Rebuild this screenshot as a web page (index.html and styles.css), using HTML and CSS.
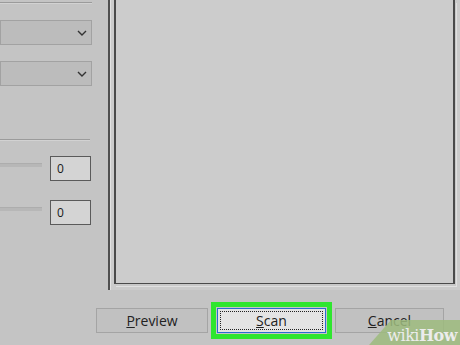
FILE: index.html
```html
<!DOCTYPE html>
<html lang="en">
<head>
    <meta charset="UTF-8">
    <title>Scan</title>
    <link rel="stylesheet" href="styles.css">
</head>
<body>

    <div class="window">
        <div class="main">
            <div class="side">
                <div class="groove top"></div>
                <div class="select">
                    <svg class="chev" width="10" height="6" viewBox="0 0 10 6"><path d="M1 1 L5 5 L9 1" fill="none" stroke="#333" stroke-width="1.4"/></svg>
                </div>
                <div class="select">
                    <svg class="chev" width="10" height="6" viewBox="0 0 10 6"><path d="M1 1 L5 5 L9 1" fill="none" stroke="#333" stroke-width="1.4"/></svg>
                </div>
                <div class="groove sep"></div>
                <div class="slider-row">
                    <div class="track"></div>
                    <div class="num">0</div>
                </div>
                <div class="slider-row">
                    <div class="track"></div>
                    <div class="num">0</div>
                </div>
            </div>
            <div class="frame">
                <div class="well"></div>
            </div>
        </div>

        <div class="buttons">
            <button class="btn wide"><u>P</u>review</button>
            <button class="btn default"><span class="focus"><u>S</u>can</span></button>
            <button class="btn"><u>C</u>ancel</button>
        </div>

        <div class="mark">
            <svg class="mark-bg" width="95" height="26" viewBox="0 0 95 26"><polygon points="4,26 26,1 95,1 95,26" fill="#9dbb7e" opacity="0.85"/></svg>
            <span class="mark-text">wiki<b>How</b></span>
        </div>
    </div>

</body>
</html>
```

FILE: styles.css
```css
body {
    margin: 0;
    background-color: #c4c4c4;
    font-family: "Open Sans", "Noto Sans", sans-serif;
}

.window {
    position: relative;
    width: 460px;
    height: 345px;
    overflow: hidden;
}

.main {
    display: flex;
    height: 290px;
}

.side {
    width: 92px;
    padding-right: 16px;
    display: flex;
    flex-direction: column;
}

.groove {
    height: 1px;
    background-color: #9b9b9b;
    border-bottom: 1px solid #d2d2d2;
}

.groove.top {
    margin-top: 2px;
}

.select {
    height: 23px;
    margin-top: 16px;
    background-color: #bcbcbc;
    border: 1px solid #a2a2a2;
    display: flex;
    align-items: center;
    justify-content: flex-end;
    padding-right: 4px;
}

.chev {
    display: block;
}

.groove.sep {
    width: 90px;
    margin-top: 53px;
}

.slider-row {
    display: flex;
    align-items: center;
    margin-top: 15px;
}

.slider-row + .slider-row {
    margin-top: 19px;
}

.track {
    width: 42px;
    height: 3px;
    background-color: #b7b7b7;
    border-top: 1px solid #adadad;
    margin-right: 8px;
    margin-top: -8px;
}

.num {
    width: 33px;
    height: 23px;
    border: 1px solid #5a5a5a;
    background-color: #d4d4d4;
    font-size: 12px;
    color: #1a1a1a;
    line-height: 23px;
    padding-left: 6px;
}

.frame {
    width: 347px;
    border-left: 2px solid #4f4f4f;
    box-shadow: inset 1px 0 0 #e2e2e2;
    background-color: #cbcbcb;
    padding-left: 4px;
}

.well {
    width: 337px;
    height: 283px;
    border: 1px solid #4a4a4a;
    border-top: none;
    border-left-width: 2px;
    border-right-width: 2px;
    box-shadow: 1px 2px 0 #c8c8c8, 2px 3px 0 #e0e0e0;
    background-color: #cccccc;
}

.buttons {
    display: flex;
    justify-content: flex-end;
    gap: 9px;
    padding: 18px 16px 0 0;
}

.btn {
    width: 109px;
    height: 25px;
    background-color: #c1c1c1;
    border: 1px solid #a4a4a4;
    color: #222;
    font-family: "Open Sans", "Noto Sans", sans-serif;
    font-size: 14px;
    line-height: 16px;
    padding: 0;
}

.btn.wide {
    width: 112px;
}

.btn.default {
    background-color: #e4e4e4;
    border: 1px solid #2a6cd2;
    outline: 5px solid #2fe62f;
    outline-offset: 1px;
    padding: 2px;
}

.focus {
    display: block;
    height: 17px;
    border: 1px dotted #222;
    line-height: 17px;
}

.mark {
    position: absolute;
    right: 0;
    bottom: 0;
    width: 95px;
    height: 26px;
}

.mark-bg {
    position: absolute;
    left: 0;
    top: 0;
}

.mark-text {
    position: absolute;
    right: 3px;
    bottom: 3px;
    font-family: "DejaVu Serif", "Liberation Serif", serif;
    font-size: 16px;
    line-height: 12px;
    color: #ececec;
    letter-spacing: -0.5px;
}

.mark-text b {
    font-weight: bold;
}
```
